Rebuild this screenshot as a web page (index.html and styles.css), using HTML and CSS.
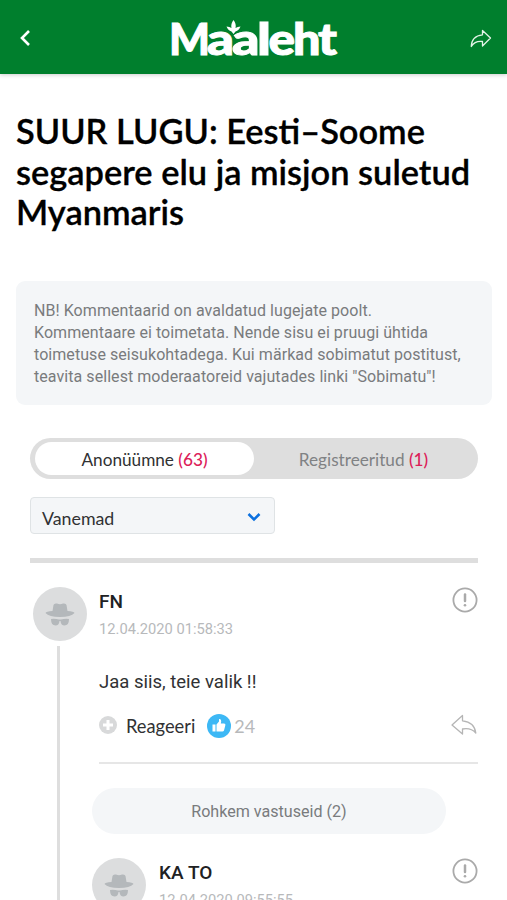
FILE: index.html
```html
<!DOCTYPE html>
<html lang="et">
<head>
<meta charset="utf-8">
<meta name="viewport" content="width=device-width, initial-scale=1">
<title>Maaleht</title>
<link rel="stylesheet" href="styles.css">
</head>
<body>
<svg class="symbols" aria-hidden="true">
  <symbol id="spy" viewBox="0 0 54 54">
    <path d="M19.500 24 20.500 18Q21 16 24 16.500Q27 18 30 16.500Q33 16 33.500 18L34.500 24Q41 24.500 41.500 26Q38 30 27 30Q16 30 12.500 26Q13 24.500 19.500 24Z"/>
    <path d="M18 32Q22 31.500 26 32.500H28Q32 31.500 36 32Q36 38.500 31.500 38.500Q28 38.500 27.500 34H26.500Q26 38.500 22.500 38.500Q18 38.500 18 32Z"/>
  </symbol>
  <symbol id="alert" viewBox="0 0 26 26">
    <circle cx="13" cy="13" r="11.600" fill="none" stroke="currentColor" stroke-width="1.800"/>
    <path d="M13 7.500V14" fill="none" stroke="currentColor" stroke-width="2.500" stroke-linecap="round"/>
    <circle cx="13" cy="18.200" r="1.300" fill="currentColor"/>
  </symbol>
</svg>
<header class="topbar">
  <svg class="back" viewBox="0 0 12 18"><path d="M10 2 3 9l7 7"/></svg>
  <svg class="logo" viewBox="0 0 168 44">
    <text y="37"><tspan x="-2" textLength="41" lengthAdjust="spacingAndGlyphs">M</tspan><tspan x="36" textLength="27" lengthAdjust="spacingAndGlyphs">a</tspan><tspan x="61" textLength="27.500" lengthAdjust="spacingAndGlyphs">a</tspan><tspan x="86" textLength="14" lengthAdjust="spacingAndGlyphs">l</tspan><tspan x="97.500" textLength="26.500" lengthAdjust="spacingAndGlyphs">e</tspan><tspan x="122" textLength="27.500" lengthAdjust="spacingAndGlyphs">h</tspan><tspan x="147" textLength="19" lengthAdjust="spacingAndGlyphs">t</tspan></text>
    <path class="leaf" d="M62.500 2Q65.500 6 64.500 10Q66.500 8.500 69.500 8.500Q68 12.500 64.500 13.500L62.500 16 60.500 13.500Q57 12.500 55.500 8.500Q58.500 8.500 60.500 10Q59.500 6 62.500 2Z"/>
  </svg>
  <svg class="share" viewBox="0 0 22 19"><path d="M12.500 1.500 20.500 9 12.500 17V12.500Q5 11.500 1.300 17.500Q1.500 7 12.500 5.800Z"/></svg>
</header>
<main>
  <h1>SUUR LUGU: Eesti–Soome<br>segapere elu ja misjon suletud<br>Myanmaris</h1>
  <p class="notice">NB! Kommentaarid on avaldatud lugejate poolt.<br>Kommentaare ei toimetata. Nende sisu ei pruugi ühtida<br>toimetuse seisukohtadega. Kui märkad sobimatut postitust,<br>teavita sellest moderaatoreid vajutades linki "Sobimatu"!</p>
  <section class="comments">
    <nav class="tabs">
      <a class="tab active">Anonüümne <b>(63)</b></a>
      <a class="tab">Registreeritud <b>(1)</b></a>
    </nav>
    <div class="select"><span>Vanemad</span><svg viewBox="0 0 14 10"><path d="m1.500 2 5.500 5.500L12.500 2"/></svg></div>
    <div class="rule"></div>
    <article class="comment">
      <div class="rail"><svg class="avatar"><use href="#spy"/></svg><div class="thread"></div></div>
      <div class="body">
        <div class="head">
          <div><h2>FN</h2><time>12.04.2020 01:58:33</time></div>
          <svg class="alert"><use href="#alert"/></svg>
        </div>
        <p class="text">Jaa siis, teie valik !!</p>
        <div class="actions">
          <svg class="plus" viewBox="0 0 18 18"><circle cx="9" cy="9" r="9"/><path d="M9 4v10M4 9h10"/></svg>
          <span class="react">Reageeri</span>
          <svg class="like" viewBox="0 0 24 24"><circle cx="12" cy="12" r="12"/><path d="M5.500 10.500H8.500V17.500H5.500ZM9.500 10.500 12 7.500V5Q14.500 4.500 14.200 7.500L13.800 9.500H17Q19 9.700 18.300 11.500L17 16.500Q16.500 17.500 15.500 17.500H9.500Z"/></svg>
          <span class="count">24</span>
          <svg class="reply" viewBox="0 0 26 22"><path d="M11.500 1.500 1 11 11.500 20V15Q20 13.500 24.800 19Q23.500 8 11.500 6.800Z"/></svg>
        </div>
        <a class="more">Rohkem vastuseid (2)</a>
        <article class="reply-item">
          <svg class="avatar"><use href="#spy"/></svg>
          <div class="reply-meta"><h2>KA TO</h2><time>12.04.2020 09:55:55</time></div>
          <svg class="alert"><use href="#alert"/></svg>
        </article>
      </div>
    </article>
  </section>
</main>
</body>
</html>
```
FILE: styles.css
```css
* { box-sizing: border-box; }
html, body { height: 900px; overflow: hidden; }
body { margin: 0; background: #fff; color: #303133; font-family: Roboto, "Liberation Sans", sans-serif; }
svg { display: block; flex: none; }
h1, h2, p { margin: 0; }
.symbols { display: none; }
.topbar { height: 74px; background: #007f2d; box-shadow: 0 1px 4px rgba(0,0,0,.2); display: flex; align-items: flex-start; justify-content: space-between; padding: 0 15px 0 19px; }
.back { width: 12px; height: 18px; margin-top: 29px; fill: none; stroke: #fff; stroke-width: 2.6; }
.logo { width: 168px; height: 44px; margin: 18px 0 0 8px; fill: #fff; overflow: visible; }
.logo text { font: 900 43px Lato, sans-serif; stroke: #fff; stroke-width: 1; }
.logo .leaf { stroke: #007f2d; stroke-width: 1.6; paint-order: stroke; }
.share { width: 22px; height: 19px; margin-top: 29px; fill: none; stroke: #e4f4e8; stroke-width: 1.3; stroke-linejoin: round; }
h1 { margin: 37px 0 0 16px; color: #000; font: 600 34.4px/40.5px Lato, sans-serif; white-space: nowrap; -webkit-text-stroke: .3px #000; }
.notice { margin: 48px 15px 0 16px; height: 124px; padding: 19px 18px; background: #f4f6f8; border-radius: 9px; color: #797b7d; font-size: 16px; line-height: 22px; letter-spacing: .06px; white-space: nowrap; }
.comments { margin: 33px 29px 0 30px; }
.tabs { height: 41px; padding: 4px 5px; border-radius: 21px; background: #dedede; display: flex; font: 17.2px/35px Lato, sans-serif; text-align: center; }
.tab { flex: 1; height: 33px; color: #808284; border-radius: 17px; }
.tab.active { background: #fff; color: #303133; }
.tab b { color: #dc2058; font-weight: 500; }
.select { width: 245px; height: 37px; margin-top: 18px; padding: 5px 13px 0 11px; border: 1px solid #dfe3e5; border-radius: 4px; background: #f4f6f8; display: flex; align-items: center; justify-content: space-between; font: 17.8px Lato, sans-serif; }
.select svg { width: 14px; height: 10px; margin-top: -1px; fill: none; stroke: #0b70df; stroke-width: 2.5; }
.rule { height: 5px; margin-top: 24px; background: #dedede; }
.comment { display: flex; margin-top: 24px; }
.rail { width: 69px; padding-left: 3px; }
.avatar { width: 54px; height: 54px; border-radius: 50%; background: #dcddde; fill: #b4b8bb; }
.thread { width: 3px; height: 260px; margin: 5px 0 0 24px; background: #dedede; }
.body { flex: 1; min-width: 0; }
.head { display: flex; justify-content: space-between; height: 54px; }
h2 { font-size: 19px; font-weight: 500; line-height: 24px; color: #202123; margin-top: 3px; }
time { display: block; font-size: 14.7px; line-height: 20px; margin-top: 5px; color: #b7b9bb; white-space: nowrap; }
.alert { width: 26px; height: 26px; color: #aaa; }
.text { margin-top: 29px; font-size: 18.5px; line-height: 24px; }
.actions { height: 49px; margin-top: 21px; display: flex; align-items: flex-start; border-bottom: 2px solid #e6e6e6; }
.plus { width: 18px; height: 18px; margin-top: 1px; fill: #d8d9da; }
.plus path { stroke: #fff; stroke-width: 3; }
.react { margin-left: 9px; font: 18.3px/22px Lato, sans-serif; }
.like { width: 24px; height: 24px; margin: -1px 0 0 12px; fill: #3db8f5; }
.like path { fill: #fff; }
.count { margin-left: 3px; font: 18px/22px Lato, sans-serif; color: #b7b9bb; }
.reply { width: 26px; height: 22px; margin: -1px 1px 0 auto; fill: none; stroke: #b5b5b5; stroke-width: 1.3; stroke-linejoin: round; }
.more { display: block; width: 354px; height: 46px; margin: 24px 0 0 -7px; border-radius: 23px; background: #f4f6f8; color: #797b7d; text-align: center; font-size: 16.1px; line-height: 47px; }
.reply-item { display: flex; margin: 24px 0 0 -7px; }
.reply-meta { margin-left: 13px; }
.reply-item .alert { margin-left: auto; }
```
